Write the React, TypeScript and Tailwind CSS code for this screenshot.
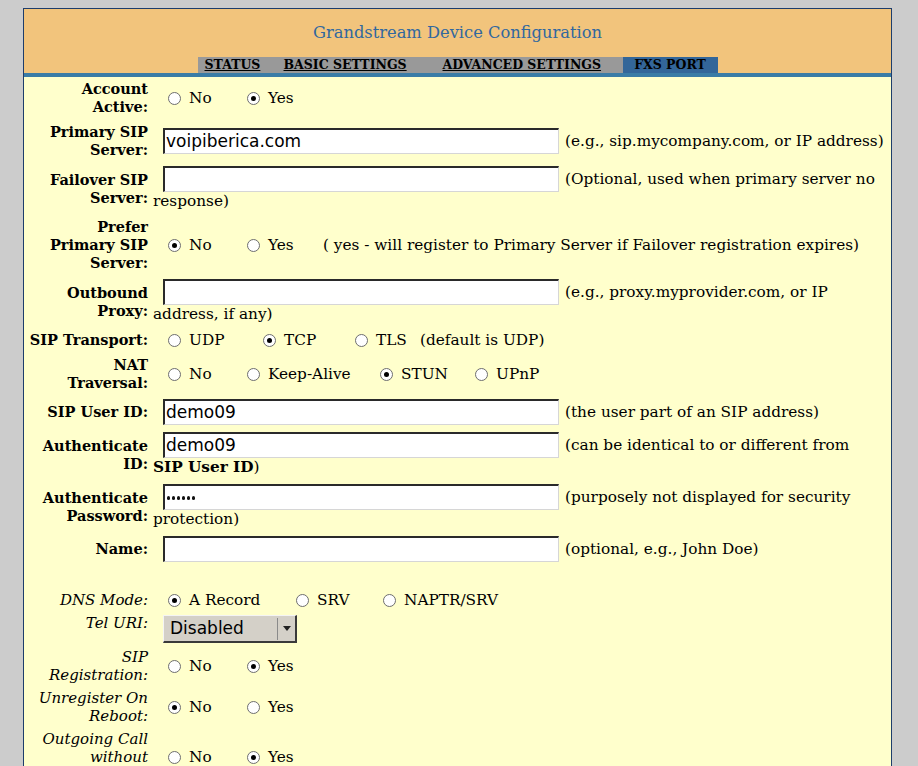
import React from 'react';

const serif = { fontFamily: '"DejaVu Serif", serif' };
const sans = { fontFamily: '"DejaVu Sans", sans-serif' };

type Opt = { label: string; w: number; checked?: boolean };

function Radio({ checked }: { checked?: boolean }) {
  return (
    <span className="inline-flex h-[13px] w-[13px] shrink-0 items-center justify-center rounded-full border border-[#6e6e6e] bg-white">
      {checked && <span className="h-[5px] w-[5px] rounded-full bg-black" />}
    </span>
  );
}

function Radios({ opts, after }: { opts: Opt[]; after?: React.ReactNode }) {
  return (
    <div className="flex items-center whitespace-nowrap pl-[15px] text-[15.3px] leading-[18px]">
      {opts.map((o) => (
        <span key={o.label} className="flex items-center" style={{ width: o.w || undefined }}>
          <Radio checked={o.checked} />
          <span className="ml-[8px]">{o.label}</span>
        </span>
      ))}
      {after}
    </div>
  );
}

function TextBox({ value, password }: { value?: string; password?: boolean }) {
  return (
    <span className="inline-flex h-[26px] w-[396px] items-center border-t-2 border-l-2 border-b border-r border-t-[#2a2a2a] border-l-[#2a2a2a] border-b-[#d6d6d6] border-r-[#d6d6d6] bg-white pl-[1px] align-middle text-[17px]" style={sans}>
      {password ? (
        <span className="ml-[1px] flex gap-[2px]">
          {[0, 1, 2, 3, 4, 5].map((i) => (
            <span key={i} className="h-[4px] w-[3px] rounded-full bg-[#111]" />
          ))}
        </span>
      ) : (
        value
      )}
    </span>
  );
}

function Field({ value, password, help, help2 }: { value?: string; password?: boolean; help: React.ReactNode; help2?: React.ReactNode }) {
  return (
    <div className="whitespace-nowrap text-[15.3px] leading-[19px]">
      <span className="inline-block w-[10px]" />
      <TextBox value={value} password={password} />
      <span className="ml-[6px] align-middle">{help}</span>
      {help2 && (
        <>
          <br />
          <span>{help2}</span>
        </>
      )}
    </div>
  );
}

function Row({ label, italic, children, top }: { label: React.ReactNode; italic?: boolean; children?: React.ReactNode; top?: boolean }) {
  return (
    <div className={'flex ' + (top ? 'items-start' : 'items-center')}>
      <div className={'w-[124px] shrink-0 text-right leading-[18px] whitespace-nowrap ' + (italic ? 'text-[15px] italic font-normal' : 'text-[14.5px] font-bold')}>
        {label}
      </div>
      <div className="ml-[5px] flex-1">{children}</div>
    </div>
  );
}

export default function App() {
  return (
    <div className="min-h-screen bg-[#cccccc] pl-[23px] pt-[8px] text-black" style={serif}>
      <div className="w-[869px] border border-[#1e3d6b] bg-[#ffffcc]">
        <div className="flex h-[64px] flex-col items-center bg-[#f2c47c]">
          <div className="mt-[14px] text-[16.3px] leading-[19px] text-[#31689f]">Grandstream Device Configuration</div>
          <div className="mt-[15px] flex h-[16px] text-[12.5px] font-bold leading-[16px]">
            <div className="flex bg-[#999999]">
              <span className="w-[79px] pl-[7px] underline">STATUS</span>
              <span className="w-[159px] pl-[7px] underline">BASIC SETTINGS</span>
              <span className="w-[187px] pl-[7px] underline">ADVANCED SETTINGS</span>
            </div>
            <div className="w-[95px] bg-[#336699] text-center">FXS PORT</div>
          </div>
        </div>
        <div className="h-[4px] bg-[#3a7ca6]" />

        <div className="flex flex-col gap-y-[7px] pt-[3px]">
          <Row label={<>Account<br />Active:</>}>
            <Radios opts={[{ label: 'No', w: 79 }, { label: 'Yes', w: 0, checked: true }]} />
          </Row>
          <Row label={<>Primary SIP<br />Server:</>}>
            <Field value="voipiberica.com" help="(e.g., sip.mycompany.com, or IP address)" />
          </Row>
          <Row label={<>Failover SIP<br />Server:</>}>
            <Field help="(Optional, used when primary server no" help2="response)" />
          </Row>
          <Row label={<>Prefer<br />Primary SIP<br />Server:</>}>
            <Radios
              opts={[{ label: 'No', w: 79, checked: true }, { label: 'Yes', w: 76 }]}
              after={<span>( yes - will register to Primary Server if Failover registration expires)</span>}
            />
          </Row>
          <Row label={<>Outbound<br />Proxy:</>}>
            <Field help="(e.g., proxy.myprovider.com, or IP" help2="address, if any)" />
          </Row>
          <Row label="SIP Transport:">
            <Radios
              opts={[{ label: 'UDP', w: 95 }, { label: 'TCP', w: 92, checked: true }, { label: 'TLS', w: 65 }]}
              after={<span>(default is UDP)</span>}
            />
          </Row>
          <Row label={<>NAT<br />Traversal:</>}>
            <Radios opts={[{ label: 'No', w: 79 }, { label: 'Keep-Alive', w: 133 }, { label: 'STUN', w: 95, checked: true }, { label: 'UPnP', w: 0 }]} />
          </Row>
          <Row label="SIP User ID:">
            <Field value="demo09" help="(the user part of an SIP address)" />
          </Row>
          <Row label={<>Authenticate<br />ID:</>}>
            <Field value="demo09" help="(can be identical to or different from" help2={<><b>SIP User ID</b>)</>} />
          </Row>
          <Row label={<>Authenticate<br />Password:</>}>
            <Field password help="(purposely not displayed for security" help2="protection)" />
          </Row>
          <Row label="Name:">
            <Field help="(optional, e.g., John Doe)" />
          </Row>
        </div>

        <div className="flex flex-col gap-y-[5px] pt-[29px] pb-[20px]">
          <Row label="DNS Mode:" italic>
            <Radios opts={[{ label: 'A Record', w: 128, checked: true }, { label: 'SRV', w: 87 }, { label: 'NAPTR/SRV', w: 0 }]} />
          </Row>
          <Row label="Tel URI:" italic top>
            <div className="pl-[10px] pt-[1px]">
              <div className="flex h-[28px] w-[134px] items-center border-t border-l border-b-2 border-r-2 border-t-[#f4f4f4] border-l-[#f4f4f4] border-b-[#3a3a3a] border-r-[#3a3a3a] bg-[#d4d0c8] text-[17px]" style={sans}>
                <span className="flex-1 pl-[6px]">Disabled</span>
                <span className="flex h-[22px] w-[18px] items-center justify-center border-l border-l-[#8a8a8a]">
                  <svg width="8" height="5" viewBox="0 0 8 5"><path d="M0 0h8L4 5z" fill="#222" /></svg>
                </span>
              </div>
            </div>
          </Row>
          <Row label={<>SIP<br />Registration:</>} italic>
            <Radios opts={[{ label: 'No', w: 79 }, { label: 'Yes', w: 0, checked: true }]} />
          </Row>
          <Row label={<>Unregister On<br />Reboot:</>} italic>
            <Radios opts={[{ label: 'No', w: 79, checked: true }, { label: 'Yes', w: 0 }]} />
          </Row>
          <Row label={<>Outgoing Call<br />without<br />Registration:</>} italic>
            <Radios opts={[{ label: 'No', w: 79 }, { label: 'Yes', w: 0, checked: true }]} />
          </Row>
        </div>
      </div>
    </div>
  );
}
